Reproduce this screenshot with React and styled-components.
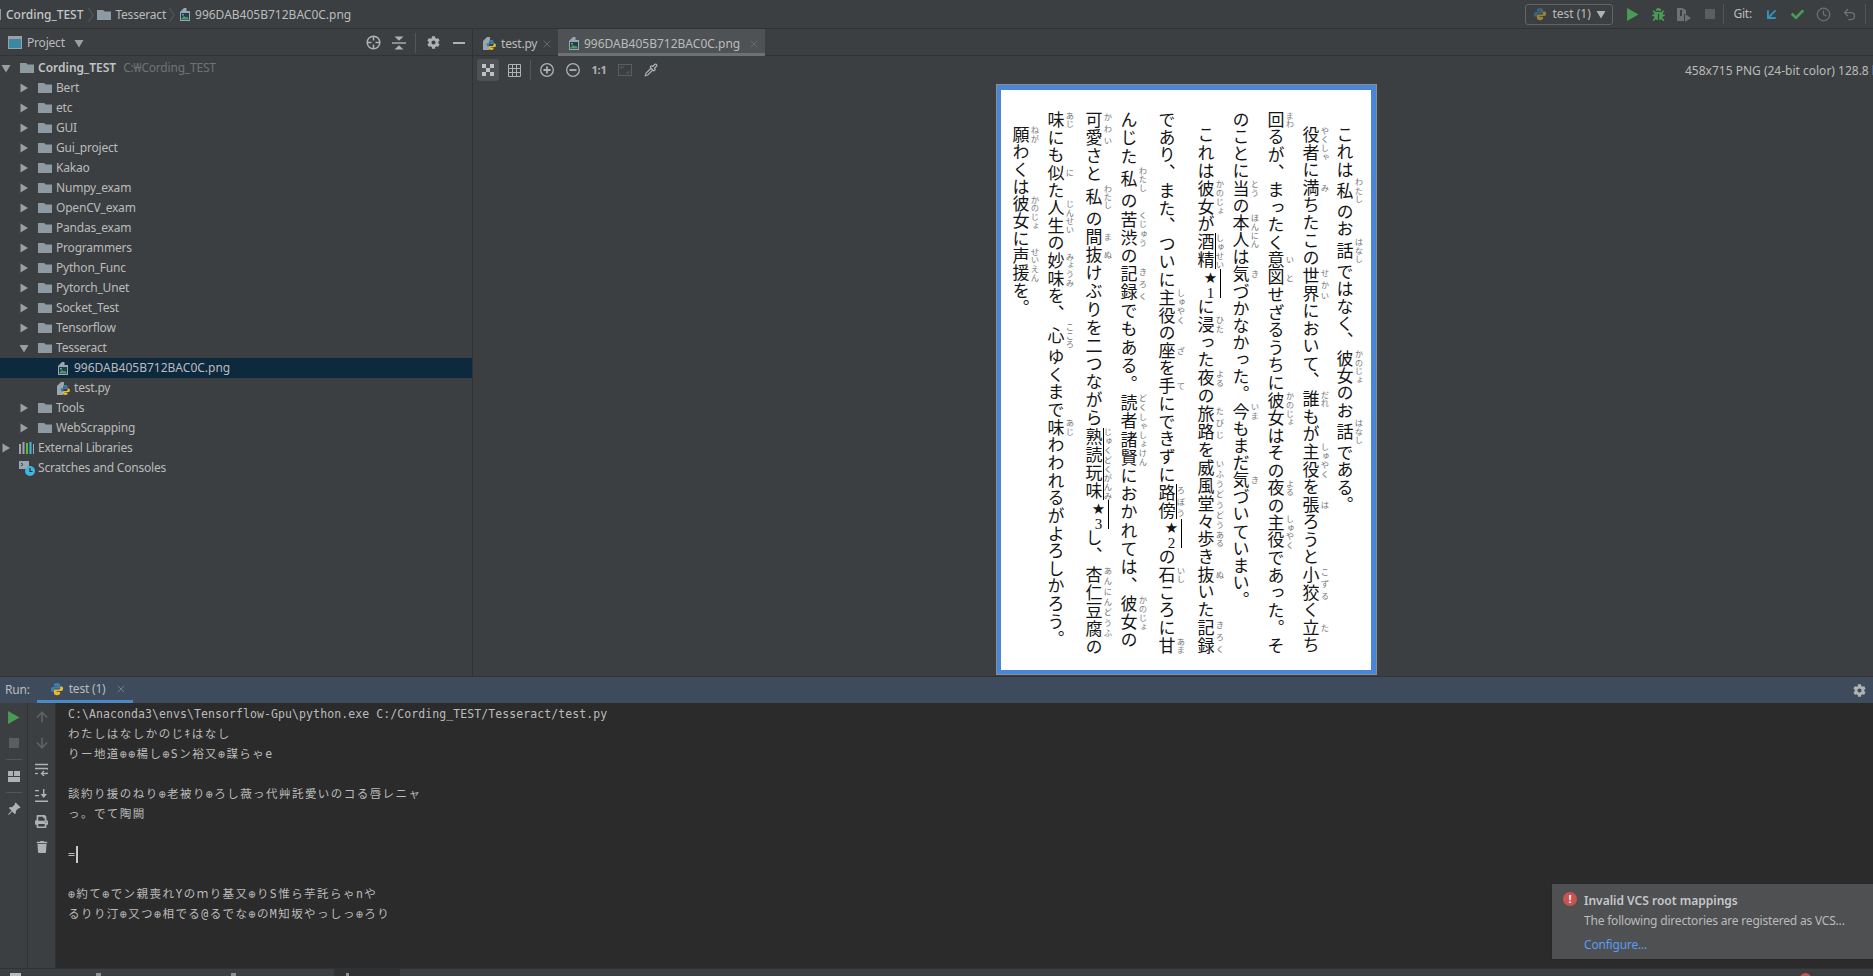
import React from "react";
import styled, { createGlobalStyle } from "styled-components";
import { FaCog, FaPrint, FaTrash, FaBug, FaCheck } from "react-icons/fa";
import { BsPinAngleFill } from "react-icons/bs";
import { Clock, Undo2, Pipette, ArrowUp, ArrowDown, ArrowDownLeft, X } from "lucide-react";

const Global = createGlobalStyle`
  html, body { margin: 0; padding: 0; background: #3c3f41; }
  * { box-sizing: border-box; }
  #root { width: 1873px; height: 976px; overflow: hidden; }
`;

const UI = `"Noto Sans", "Noto Sans CJK KR", sans-serif`;

const Shell = styled.div`
  width: 1873px; height: 976px; display: flex; flex-direction: column;
  background: #3c3f41; color: #bbbbbb; font: 12px/16px ${UI}; letter-spacing: -.2px; overflow: hidden;
`;

/* ---------- drawn icons ---------- */
const Svg = styled.svg`flex: none; display: block;`;
const Folder = () => (
  <Svg width="16" height="16" viewBox="0 0 16 16"><path d="M1 3h6.2l1.3 1.6H15V13H1z" fill="#8e9aa2" /></Svg>
);
const Caret = ({ open, color = "#9b9fa1" }) => (
  <Svg width="10" height="10" viewBox="0 0 10 10">
    <path d={open ? "M0.5 2h9L5 9.5z" : "M1.5 0.5 9 5l-7.5 4.5z"} fill={color} />
  </Svg>
);
const PyLogo = ({ size = 14, dim }) => (
  <Svg width={size} height={size} viewBox="0 0 16 16" style={{ opacity: dim ? 0.55 : 1 }}>
    <path d="M8 1C5 1 4.5 2 4.5 3.5V5H8.5V5.8H3C1.6 5.8 1 7 1 8.5S1.6 11 3 11H4.5V9.2C4.5 8 5.3 7.4 6.5 7.4H10C11 7.4 11.5 6.8 11.5 6V3.5C11.5 2 10.5 1 8 1Z" fill="#3d80ad" />
    <path d="M8 1C5 1 4.5 2 4.5 3.5V5H8.5V5.8H3C1.6 5.8 1 7 1 8.5S1.6 11 3 11H4.5V9.2C4.5 8 5.3 7.4 6.5 7.4H10C11 7.4 11.5 6.8 11.5 6V3.5C11.5 2 10.5 1 8 1Z" fill="#e9b92e" transform="rotate(180 8 8)" />
  </Svg>
);
const PyFile = () => (
  <Svg width="14" height="15" viewBox="0 0 14 15">
    <path d="M0 5 4 1h3v5H6v8H0z" fill="#9aa7b0" />
    <path d="M8 4C6.4 4 6 4.6 6 5.4v1h3v.5H5C4 6.900 3.600 7.600 3.600 8.600S4 10.400 5 10.400h1V9.200c0-.8.500-1.200 1.300-1.200h2.300c.7 0 1-.4 1-1V5.400C10.600 4.600 10 4 8 4Z" fill="#3d80ad" />
    <path d="M8.500 14c1.600 0 2-.6 2-1.400v-1h-3v-.5h4c1 0 1.400-.7 1.400-1.700s-.4-1.800-1.400-1.800h-1v1.200c0 .8-.5 1.200-1.300 1.200H6.900c-.7 0-1 .4-1 1v1.600c0 .8.600 1.400 2.600 1.400Z" fill="#e9b92e" />
  </Svg>
);
const ImgFile = () => (
  <Svg width="12" height="15" viewBox="0 0 12 15">
    <path d="M1 5 5 1h2.500v3H11v10H1z" fill="#9aa7b0" />
    <rect x="2" y="6" width="8" height="7" fill="#22404a" />
    <path d="M2.500 11.500 5 9l2 1.500 1-1 1.500 2v1h-7z" fill="#4e9a6a" />
    <rect x="3" y="7" width="2" height="1.500" fill="#5aa0c0" />
  </Svg>
);
const Chevron = () => (
  <Svg width="6" height="16" viewBox="0 0 6 16"><path d="M.5 1 5 8 .5 15" stroke="#5b5e60" fill="none" /></Svg>
);
const ProjectIcon = () => (
  <Svg width="14" height="13" viewBox="0 0 14 13">
    <rect x=".5" y=".5" width="13" height="12" fill="#3b87a6" stroke="#9aa0a4" />
    <rect x="1" y="1" width="12" height="2" fill="#9aa0a4" />
  </Svg>
);
const Crosshair = () => (
  <Svg width="15" height="15" viewBox="0 0 15 15" fill="none" stroke="#afb1b3" strokeWidth="1.500">
    <circle cx="7.500" cy="7.500" r="6.300" /><path d="M7.500 1v4.500M7.500 9.500V14M1 7.500h4.500M9.500 7.500H14" />
  </Svg>
);
const CollapseAll = () => (
  <Svg width="14" height="14" viewBox="0 0 14 14" fill="#afb1b3">
    <path d="M0 6.300h14v1.400H0z" /><path d="M2.500 0.500h9L7 4.800zM7 9.200l4.500 4.300h-9z" />
  </Svg>
);
const Minus = () => (
  <Svg width="12" height="12" viewBox="0 0 12 12"><path d="M0 5h12v2H0z" fill="#afb1b3" /></Svg>
);
const Checker = () => (
  <Svg width="12" height="12" viewBox="0 0 12 12" fill="#bfc1c3">
    <path d="M0 0h4v4H0zM8 0h4v4H8zM4 4h4v4H4zM0 8h4v4H0zM8 8h4v4H8z" />
  </Svg>
);
const GridIcon = () => (
  <Svg width="13" height="13" viewBox="0 0 13 13" fill="none" stroke="#afb1b3">
    <path d="M.5.500h12v12H.5zM.5 4.500h12M.5 8.500h12M4.500.500v12M8.500.500v12" />
  </Svg>
);
const ZoomGlyph = ({ plus }) => (
  <Svg width="14" height="14" viewBox="0 0 14 14" fill="none" stroke="#afb1b3" strokeWidth="1.300">
    <circle cx="7" cy="7" r="6.300" />
    <path d={plus ? "M3.500 7h7M7 3.500v7" : "M3.500 7h7"} strokeWidth="1.800" />
  </Svg>
);
const FitIcon = () => (
  <Svg width="14" height="12" viewBox="0 0 14 12" fill="none" stroke="#5b5e60">
    <rect x=".5" y=".5" width="13" height="11" />
    <path d="M3 5V3h3M11 7v2H8" />
  </Svg>
);
const PlayIcon = ({ size = 12 }) => (
  <Svg width={size} height={size} viewBox="0 0 12 12"><path d="M1 0l10.500 6L1 12z" fill="#499c54" /></Svg>
);
const Cover = () => (
  <Svg width="16" height="15" viewBox="0 0 16 15">
    <path d="M1 1h5l4 2v4H8v7H1z" fill="#6e7274" /><path d="M9 7l6 4-6 4z" fill="#6e7274" />
    <path d="M4 3h2v6H4z" fill="#3c3f41" />
  </Svg>
);
const Square = ({ size = 10, color = "#5b5e60" }) => (
  <Svg width={size} height={size} viewBox="0 0 10 10"><rect width="10" height="10" fill={color} /></Svg>
);
const LayoutIcon = () => (
  <Svg width="12" height="11" viewBox="0 0 12 11" fill="#afb1b3"><path d="M0 0h5v5H0zM6 0h6v5H6zM0 6h12v5H0z" /></Svg>
);
const WrapIcon = () => (
  <Svg width="13" height="13" viewBox="0 0 13 13" fill="none" stroke="#afb1b3" strokeWidth="1.300">
    <path d="M0 1.500h13M0 5.500h11.500a2 2 0 0 1 0 5H7" /><path d="M9 8 6.500 10.500 9 13" /><path d="M0 10.500h3" />
  </Svg>
);
const ScrollEnd = () => (
  <Svg width="13" height="13" viewBox="0 0 13 13" fill="#afb1b3">
    <path d="M0 1h4v1.300H0zM0 6h4v1.300H0zM0 11.500h13V13H0zM8 0h1.400v5H12L8.700 9 5.500 5H8z" />
  </Svg>
);

/* ---------- top navigation bar ---------- */
const NavBar = styled.header`
  height: 29px; flex: none; display: flex; align-items: center;
  border-bottom: 1px solid #323232; padding-right: 7px;
`;
const Crumbs = styled.nav`display: flex; align-items: center; flex: 1; padding-top: 1px; margin-left: -1px;`;
const Crumb = styled.span`
  display: inline-flex; align-items: center; gap: ${p => p.$gap ?? 3}px;
  margin: 0 ${p => p.$mr ?? 3}px 0 ${p => p.$ml ?? 0}px;
  font-weight: ${p => (p.$strong ? 500 : 400)};
  color: ${p => (p.$strong ? "#c4c6c8" : "#bbbbbb")};
`;
const FileName = styled.span`letter-spacing: 0;`;
const CrumbSlit = styled.span`width: 2px; height: 11px; background: #8e9aa2; margin-right: 5px;`;
const RunConfig = styled.div`
  width: 88px; height: 21px; border: 1px solid #646464; border-radius: 3px; margin-right: 6px;
  display: flex; align-items: center; gap: 5px; padding: 0 6px 0 7px; font-size: 12px; letter-spacing: 0;
`;
const Grow = styled.span`flex: 1; white-space: nowrap;`;
const ToolSlot = styled.span`
  width: 26px; height: 22px; display: flex; align-items: center; justify-content: center; flex: none;
`;
const VBar = styled.span`
  width: 1px; height: 20px; background: #515658; flex: none;
  margin: 0 ${p => p.$r || 0}px 0 ${p => p.$l || 0}px;
`;
const GitLabel = styled.span`margin: 0 6px 0 9px; font-size: 12px;`;

/* ---------- main split ---------- */
const Main = styled.div`flex: 1; min-height: 0; display: flex;`;
const Sidebar = styled.aside`
  width: 473px; flex: none; border-right: 1px solid #323232; display: flex; flex-direction: column;
`;
const PaneHeader = styled.div`
  height: 27px; flex: none; display: flex; align-items: center; padding: 1px 0 0 8px;
  border-bottom: 1px solid #323232;
`;
const PaneTitle = styled.span`margin: 0 9px 0 5px;`;
const PaneTools = styled.div`margin-left: auto; display: flex; align-items: center;`;
const Tree = styled.ul`list-style: none; margin: 0; padding: 2px 0 0;`;
const Row = styled.li`
  height: 20px; display: flex; align-items: center; white-space: nowrap;
  padding-left: ${p => p.$depth * 18 + 1}px;
  background: ${p => (p.$selected ? "#0d293e" : "transparent")};
`;
const ArrowSlot = styled.span`width: 18px; flex: none; display: flex;`;
const IconSlot = styled.span`width: 19px; flex: none; display: flex; align-items: center; padding-left: ${p => p.$pad || 0}px;`;
const RowLabel = styled.span`
  font-weight: ${p => (p.$strong ? 600 : 400)}; color: ${p => (p.$strong ? "#c2c4c6" : "#bbbbbb")};
  letter-spacing: ${p => (p.$strong ? 0 : "inherit")};
`;
const RowHint = styled.span`margin-left: 7px; color: #6f7274;`;

/* ---------- editor ---------- */
const Editor = styled.section`flex: 1; min-width: 0; display: flex; flex-direction: column; overflow: hidden;`;
const TabBar = styled.div`height: 27px; flex: none; display: flex; border-bottom: 1px solid #323232;`;
const Tab = styled.div`
  display: flex; align-items: center; gap: 4px; height: 27px;
  padding: ${p => (p.$active ? "5px 5px 0 10px" : "2px 7px 0 10px")};
  width: ${p => p.$w}px; white-space: nowrap; position: relative;
  background: ${p => (p.$active ? "#4e5254" : "transparent")};
  border-bottom: ${p => (p.$active ? "3px solid #6c7174" : "0")};
`;
const TabClose = styled.span`margin-left: auto; display: flex; color: #66696b;`;
const ImageBar = styled.div`height: 28px; flex: none; display: flex; align-items: center; padding-left: 4px; white-space: nowrap;`;
const ImgTool = styled.span`
  width: 22px; height: 22px; flex: none; margin-right: ${p => p.$mr || 0}px; border-radius: 3px;
  display: flex; align-items: center; justify-content: center;
  font-weight: 700; font-size: 11px; color: #afb1b3;
  background: ${p => (p.$on ? "#4e5254" : "transparent")};
`;
const ImageInfo = styled.span`
  margin: 2px 0 0 auto; flex: none; width: 188px; overflow: hidden; white-space: nowrap; letter-spacing: 0;
`;
const Canvas = styled.div`flex: 1; min-height: 0; padding-left: 523px;`;
const Frame = styled.div`
  width: 381px; height: 591px; border: 1px solid #8d8d8d; background: #4a86d8;
  padding: 5px 5px 4px 4px;
`;
const Page = styled.div`
  width: 100%; height: 100%; background: #fff; display: flex; flex-direction: row-reverse;
  padding-right: 7px; overflow: hidden; color: #151515; letter-spacing: 0;
  font-family: "Noto Sans CJK JP", sans-serif; font-size: 17px;
`;
const Col = styled.div`
  writing-mode: vertical-rl; width: 34px; flex: none; line-height: 34px; white-space: nowrap;
  letter-spacing: ${p => p.$ls}px; padding-top: ${p => p.$top}px; margin-left: ${p => p.$gap}px;
`;
const Base = styled.ruby`
  ruby-position: over;
  margin-inline: ${p => (p.$wide ? 4 : 0)}px;
  rt { font-size: 8.300px; color: #75787a; letter-spacing: 0; line-height: 1; }
`;
const Marked = styled.span`
  position: relative;
  &::after { content: ""; position: absolute; top: 0; bottom: 0; left: calc(50% + 9px); width: 1px; background: #000; }
`;
const Note = styled.span`
  position: relative; text-orientation: upright; left: 5px; letter-spacing: 0;
  font-family: "DejaVu Sans", sans-serif; font-size: 15px;
  &::after { content: ""; position: absolute; top: 0; bottom: 0; left: calc(50% + 9px); width: 1px; background: #000; }
`;
const NoteNum = styled.span`
  font-family: "Liberation Serif", serif; font-size: 15px; margin-inline: -2px -3px;
`;

const cols = [
  { top: 36, ls: 0.3, text: "これは{私|わたし}のお{話|はなし}ではなく、{彼女|かのじょ}のお{話|はなし}である。" },
  { top: 36, ls: 0.6, gap: 1, text: "{役者|やくしゃ}に{満|み}ちたこの{世界|せかい}において、{誰|だれ}もが{主役|しゅやく}を{張|は}ろうと{小狡|こずる}く{立|た}ち" },
  { top: 21, ls: 0.53, gap: 1, text: "{回|まわ}るが、まったく{意図|いと}せざるうちに{彼女|かのじょ}はその{夜|よる}の{主役|しゅやく}であった。そ" },
  { top: 21, ls: 0.15, gap: 1, text: "のことに{当|とう}の{本人|ほんにん}は{気|き}づかなかった。{今|いま}もまだ{気|き}づいていまい。" },
  { top: 36, ls: 0.85, gap: 5, text: "これは{彼女|かのじょ}が{酒精|しゅせい|1}に{浸|ひた}った{夜|よる}の{旅路|たびじ}を{威風堂々|いふうどうどう}{歩|ある}き{抜|ぬ}いた{記録|きろく}" },
  { top: 21, ls: 0.75, gap: 4, text: "であり、また、ついに{主役|しゅやく}の{座|ざ}を{手|て}にできずに{路傍|ろぼう|2}の{石|いし}ころに{甘|あま}" },
  { top: 21, ls: 1.3, gap: 1, text: "んじた{私|わたし}の{苦渋|くじゅう}の{記録|きろく}でもある。{読者諸賢|どくしゃしょけん}におかれては、{彼女|かのじょ}の" },
  { top: 21, ls: 1.15, gap: 4, text: "{可愛|かわい}さと{私|わたし}の{間抜|まぬ}けぶりを二つながら{熟読玩味|じゅくどくがんみ|3}し、{杏仁豆腐|あんにんどうふ}の" },
  { top: 21, ls: 0.63, gap: 1, text: "{味|あじ}にも{似|に}た{人生|じんせい}の{妙味|みょうみ}を、{心|こころ}ゆくまで{味|あじ}わわれるがよろしかろう。" },
  { top: 36, ls: 0.3, gap: 1, text: "{願|ねが}わくは{彼女|かのじょ}に{声援|せいえん}を。" },
];

function renderLine(text) {
  return text.split(/(\{[^}]+\})/).map((part, i) => {
    if (!part.startsWith("{")) return <React.Fragment key={i}>{part}</React.Fragment>;
    const [b, r, n] = part.slice(1, -1).split("|");
    const ruby = <Base $wide={b.length === 1 && r.length >= 3}>{b}<rt>{r}</rt></Base>;
    if (!n) return <React.Fragment key={i}>{ruby}</React.Fragment>;
    return (
      <React.Fragment key={i}>
        <Marked>{ruby}</Marked>
        <Note>★<NoteNum>{n}</NoteNum></Note>
      </React.Fragment>
    );
  });
}

/* ---------- run panel ---------- */
const RunPanel = styled.section`height: 292px; flex: none; display: flex; flex-direction: column; position: relative;`;
const RunHeader = styled.div`
  height: 27px; flex: none; display: flex; align-items: center; background: #3d4b5c;
  border-top: 1px solid #323232; padding: 0 7px 0 5px;
`;
const RunTab = styled.div`
  width: 96px; height: 26px; margin-left: 7px; display: flex; align-items: center; gap: 5px;
  padding: 0 0 0 13px; border-bottom: 3px solid #4a88c7;
`;
const RunClose = styled.span`color: #6f7d8c; display: flex; margin-left: 5px;`;
const RunBody = styled.div`flex: 1; min-height: 0; display: flex;`;
const Strip = styled.div`
  width: ${p => p.$w}px; flex: none; display: flex; flex-direction: column; align-items: center;
  padding-top: 1px; border-right: 1px solid #323232; background: #3c3f41;
`;
const StripBtn = styled.span`height: ${p => p.$h || 26}px; width: 100%; display: flex; align-items: center; justify-content: center; flex: none; color: #afb1b3;`;
const StripRule = styled.span`width: 16px; height: 1px; background: #515658; margin: ${p => p.$my || 3}px 0; flex: none;`;
const Console = styled.pre`
  flex: 1; margin: 0; background: #2b2b2b; color: #bbbbbb; padding: 1px 0 0 12px; overflow: hidden;
  font: 11.500px/20px "DejaVu Sans Mono", "Noto Sans CJK JP", monospace; letter-spacing: .08px;
`;
const Jp = styled.div`height: 20px; letter-spacing: 1.450px;`;
const Cmd = styled.div`height: 20px;`;
const Cursor = styled.span`display: inline-block; width: 2px; height: 17px; background: #c8c8c8; vertical-align: -5px;`;
const Toast = styled.aside`
  position: absolute; right: 0; bottom: 9px; width: 321px; height: 75px; background: #4e5052;
  display: grid; grid-template-columns: 32px 1fr; padding: 7px 0 0; box-shadow: 0 0 1px #222;
`;
const ToastDot = styled.span`
  width: 14px; height: 14px; border-radius: 50%; background: #c75450; color: #fff; margin: 1px 0 0 11px;
  display: flex; align-items: center; justify-content: center; font: 700 11px/14px "Liberation Sans", sans-serif;
`;
const ToastBody = styled.div`display: flex; flex-direction: column; gap: 0;`;
const ToastTitle = styled.strong`font-weight: 600; color: #c6c8ca; height: 20px; line-height: 19px; letter-spacing: 0;`;
const ToastText = styled.span`height: 20px; line-height: 20px; white-space: nowrap;`;
const ToastLink = styled.span`height: 27px; line-height: 27px; color: #589df6;`;

const StatusBar = styled.footer`
  height: 8px; flex: none; background: #3c3f41; border-top: 1px solid #323232; display: flex; overflow: hidden; position: relative;
`;
const StatusTick = styled.span`
  position: absolute; left: ${p => p.$x}px; width: ${p => p.$w}px; top: ${p => p.$top ?? 4}px;
  background: ${p => p.$c}; border-radius: ${p => (p.$round ? "50%" : "0")};
  height: ${p => p.$h || 6}px;
`;

/* ---------- data ---------- */
const folders1 = ["Bert","etc","GUI","Gui_project","Kakao","Numpy_exam","OpenCV_exam","Pandas_exam","Programmers","Python_Func","Pytorch_Unet","Socket_Test","Tensorflow"];
const consoleLines = [
  "わたしはなしかのじｷはなし",
  "りー地道⊕⊕楊し⊕Sン裕又⊕謀らゃe",
  "",
  "談約り援のねり⊕老被り⊕ろし薇っ代艸託愛いのコる唇レニャ",
  "っ。でて陶闕",
  "",
  null,
  "",
  "⊕約て⊕でン親喪れYのｍり基又⊕りS惟ら芋託らゃnや",
  "るりり汀⊕又つ⊕相でる@るでな⊕のM知坂やっしっ⊕ろり",
];

const FolderRow = ({ name, depth = 1, open }) => (
  <Row $depth={depth}>
    <ArrowSlot><Caret open={open} /></ArrowSlot>
    <IconSlot><Folder /></IconSlot>
    <RowLabel>{name}</RowLabel>
  </Row>
);

export default function App() {
  return (
    <Shell>
      <Global />
      <NavBar>
        <Crumbs>
          <CrumbSlit />
          <Crumb $strong $mr={5}><FileName>Cording_TEST</FileName></Crumb>
          <Chevron />
          <Crumb $ml={2}><Folder />Tesseract</Crumb>
          <Chevron />
          <Crumb $ml={4} $gap={4}><ImgFile /><FileName>996DAB405B712BAC0C.png</FileName></Crumb>
        </Crumbs>
        <RunConfig><PyLogo size={14} dim /><Grow>test (1)</Grow><Caret open color="#afb1b3" /></RunConfig>
        <ToolSlot><PlayIcon size={13} /></ToolSlot>
        <ToolSlot><FaBug size={13} color="#499c54" /></ToolSlot>
        <ToolSlot><Cover /></ToolSlot>
        <ToolSlot><Square size={10} /></ToolSlot>
        <VBar />
        <GitLabel>Git:</GitLabel>
        <ToolSlot><ArrowDownLeft size={17} color="#3592c4" strokeWidth={2.6} /></ToolSlot>
        <ToolSlot><FaCheck size={13} color="#499c54" /></ToolSlot>
        <ToolSlot><Clock size={15} color="#6e7274" /></ToolSlot>
        <ToolSlot><Undo2 size={15} color="#6e7274" /></ToolSlot>
        <VBar $l={3} />
      </NavBar>

      <Main>
        <Sidebar>
          <PaneHeader>
            <ProjectIcon />
            <PaneTitle>Project</PaneTitle>
            <Caret open />
            <PaneTools>
              <ToolSlot><Crosshair /></ToolSlot>
              <ToolSlot><CollapseAll /></ToolSlot>
              <VBar $l={3} $r={4} />
              <ToolSlot><FaCog size={13} color="#afb1b3" /></ToolSlot>
              <ToolSlot><Minus /></ToolSlot>
            </PaneTools>
          </PaneHeader>
          <Tree>
            <Row $depth={0}>
              <ArrowSlot><Caret open /></ArrowSlot>
              <IconSlot><Folder /></IconSlot>
              <RowLabel $strong>Cording_TEST</RowLabel>
              <RowHint>C:₩Cording_TEST</RowHint>
            </Row>
            {folders1.map(n => <FolderRow key={n} name={n} />)}
            <FolderRow name="Tesseract" open />
            <Row $depth={2} $selected>
              <ArrowSlot />
              <IconSlot $pad={2}><ImgFile /></IconSlot>
              <RowLabel><FileName>996DAB405B712BAC0C.png</FileName></RowLabel>
            </Row>
            <Row $depth={2}>
              <ArrowSlot />
              <IconSlot $pad={2}><PyFile /></IconSlot>
              <RowLabel>test.py</RowLabel>
            </Row>
            <FolderRow name="Tools" />
            <FolderRow name="WebScrapping" />
            <Row $depth={0}>
              <ArrowSlot><Caret /></ArrowSlot>
              <IconSlot>
                <Svg width="15" height="13" viewBox="0 0 15 13">
                  <path d="M0 2h2v10H0z" fill="#9aa7b0" /><path d="M3.500 0h2v12h-2z" fill="#9aa7b0" />
                  <path d="M7 1h2v11H7z" fill="#62b543" /><path d="M10.500 0h2v12h-2z" fill="#40b6e0" /><path d="M14 2h1v10h-1z" fill="#9aa7b0" />
                </Svg>
              </IconSlot>
              <RowLabel>External Libraries</RowLabel>
            </Row>
            <Row $depth={0}>
              <ArrowSlot />
              <IconSlot>
                <Svg width="16" height="16" viewBox="0 0 16 16">
                  <path d="M0 1h10v8H0z" fill="#9aa7b0" /><path d="M2 3l2 1.500L2 6" stroke="#3c3f41" fill="none" />
                  <circle cx="11" cy="11" r="5" fill="#40b6e0" /><path d="M11 8v3.500h2.500" stroke="#2b2b2b" fill="none" strokeWidth="1.200" />
                </Svg>
              </IconSlot>
              <RowLabel>Scratches and Consoles</RowLabel>
            </Row>
          </Tree>
        </Sidebar>

        <Editor>
          <TabBar>
            <Tab $w={85}><PyFile /><span>test.py</span><TabClose><X size={12} /></TabClose></Tab>
            <Tab $w={207} $active><ImgFile /><FileName>996DAB405B712BAC0C.png</FileName><TabClose><X size={12} /></TabClose></Tab>
          </TabBar>
          <ImageBar>
            <ImgTool $on $mr={4}><Checker /></ImgTool>
            <ImgTool $mr={5}><GridIcon /></ImgTool>
            <VBar $r={5} />
            <ImgTool $mr={4}><ZoomGlyph plus /></ImgTool>
            <ImgTool $mr={4}><ZoomGlyph /></ImgTool>
            <ImgTool $mr={4}>1:1</ImgTool>
            <ImgTool $mr={4}><FitIcon /></ImgTool>
            <ImgTool><Pipette size={14} color="#afb1b3" /></ImgTool>
            <ImageInfo>458x715 PNG (24-bit color) 128.8 kB</ImageInfo>
          </ImageBar>
          <Canvas>
            <Frame>
              <Page>
                {cols.map((c, i) => (
                  <Col key={i} $top={c.top} $ls={c.ls} $gap={c.gap || 0}>{renderLine(c.text)}</Col>
                ))}
              </Page>
            </Frame>
          </Canvas>
        </Editor>
      </Main>

      <RunPanel>
        <RunHeader>
          <span>Run:</span>
          <RunTab><PyLogo size={14} /><span>test (1)</span><RunClose><X size={12} /></RunClose></RunTab>
          <PaneTools><FaCog size={13} color="#afb1b3" /></PaneTools>
        </RunHeader>
        <RunBody>
          <Strip $w={28}>
            <StripBtn><PlayIcon size={13} /></StripBtn>
            <StripBtn><Square size={10} /></StripBtn>
            <StripRule />
            <StripBtn><LayoutIcon /></StripBtn>
            <StripRule />
            <StripBtn><BsPinAngleFill size={14} /></StripBtn>
          </Strip>
          <Strip $w={28}>
            <StripBtn><ArrowUp size={16} color="#5f6365" strokeWidth={2.4} /></StripBtn>
            <StripBtn><ArrowDown size={16} color="#5f6365" strokeWidth={2.4} /></StripBtn>
            <StripBtn><WrapIcon /></StripBtn>
            <StripBtn><ScrollEnd /></StripBtn>
            <StripBtn><FaPrint size={13} /></StripBtn>
            <StripBtn><FaTrash size={12} /></StripBtn>
          </Strip>
          <Console>
            <Cmd>C:\Anaconda3\envs\Tensorflow-Gpu\python.exe C:/Cording_TEST/Tesseract/test.py</Cmd>
            {consoleLines.map((l, i) => (
              <Jp key={i}>{l === null ? <>=<Cursor /></> : l}</Jp>
            ))}
          </Console>
        </RunBody>
        <Toast>
          <ToastDot>!</ToastDot>
          <ToastBody>
            <ToastTitle>Invalid VCS root mappings</ToastTitle>
            <ToastText>The following directories are registered as VCS...</ToastText>
            <ToastLink>Configure...</ToastLink>
          </ToastBody>
        </Toast>
      </RunPanel>

      <StatusBar>
        <StatusTick $x={10} $w={11} $c="#b8babc" />
        <StatusTick $x={96} $w={5} $c="#8d9092" />
        <StatusTick $x={231} $w={5} $c="#8d9092" />
        <StatusTick $x={334} $w={66} $top={0} $h={8} $c="#2f3133" />
        <StatusTick $x={346} $w={3} $c="#8d9092" />
        <StatusTick $x={1800} $w={11} $h={11} $round $c="#c75450" />
      </StatusBar>
    </Shell>
  );
}
